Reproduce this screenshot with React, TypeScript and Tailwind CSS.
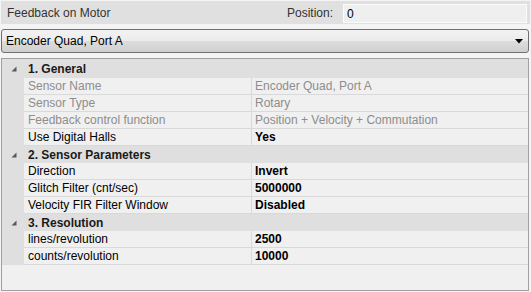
import React from "react";

type Row = { name: string; value: string; readOnly?: boolean };
type Cat = { title: string; rows: Row[] };

const cats: Cat[] = [
  {
    title: "1. General",
    rows: [
      { name: "Sensor Name", value: "Encoder Quad, Port A", readOnly: true },
      { name: "Sensor Type", value: "Rotary", readOnly: true },
      { name: "Feedback control function", value: "Position + Velocity + Commutation", readOnly: true },
      { name: "Use Digital Halls", value: "Yes" },
    ],
  },
  {
    title: "2. Sensor Parameters",
    rows: [
      { name: "Direction", value: "Invert" },
      { name: "Glitch Filter (cnt/sec)", value: "5000000" },
      { name: "Velocity FIR Filter Window", value: "Disabled" },
    ],
  },
  {
    title: "3. Resolution",
    rows: [
      { name: "lines/revolution", value: "2500" },
      { name: "counts/revolution", value: "10000" },
    ],
  },
];

function Expander() {
  return (
    <svg width="6" height="6" viewBox="0 0 6 6" className="block">
      <polygon points="5.5,0.5 5.5,5.5 0.5,5.5" fill="#595959" />
    </svg>
  );
}

export default function App() {
  return (
    <div
      className="w-[531px] h-[292px] bg-[#f4f4f4] p-[1px] text-[12px] text-black flex flex-col overflow-hidden"
      style={{ fontFamily: '"Liberation Sans", Arial, sans-serif' }}
    >
      {/* Header bar */}
      <div className="h-[23px] bg-[#e0e0e0] flex items-center shrink-0">
        <div className="pl-[6px] text-[#333] flex-1">Feedback on Motor</div>
        <div className="text-[#333] mr-[10px]">Position:</div>
        <div className="w-[184px] h-[19px] mt-[3px] mr-[3px] self-start bg-[#efefef] border border-[#fbfbfb] flex items-center pl-[3px] text-black">
          0
        </div>
      </div>

      {/* Combo */}
      <div className="mt-[5px] mr-[1px] h-[24px] shrink-0 rounded-[3px] border border-[#707070] bg-[linear-gradient(to_bottom,#f3f3f3_0%,#ebebeb_50%,#dddddd_50%,#cfcfcf_100%)] flex items-center pl-[4px] pr-[5px]">
        <span className="flex-1">Encoder Quad, Port A</span>
        <svg width="8" height="5" viewBox="0 0 8 5" className="block">
          <polygon points="0,0 8,0 4,4.5" fill="#000" />
        </svg>
      </div>

      {/* Property grid */}
      <div className="mt-[5px] mr-[1px] flex-1 border border-[#a0a0a0] bg-[#f0f0f0] flex flex-col">
        {cats.map((c, i) => (
          <React.Fragment key={c.title}>
            <div
              className={`${i === 0 ? "h-[19px] pt-[1px]" : "h-[17px]"} bg-[#dfdfdf] flex items-center shrink-0`}
            >
              <div className="w-[22px] flex justify-center pl-[2px]">
                <Expander />
              </div>
              <div className="pl-[4px] font-bold text-[#1a1a1a]">{c.title}</div>
            </div>
            {c.rows.map((r) => (
              <div key={r.name} className="h-[17px] flex shrink-0">
                <div className="w-[22px] bg-[#dfdfdf]" />
                <div
                  className={`w-[228px] border-b border-r border-[#d9d9d9] pl-[4px] leading-[17px] ${
                    r.readOnly ? "text-[#8d8d8d]" : "text-black"
                  }`}
                >
                  {r.name}
                </div>
                <div
                  className={`flex-1 border-b border-[#d9d9d9] pl-[3px] leading-[17px] ${
                    r.readOnly ? "text-[#8d8d8d]" : "text-black font-bold"
                  }`}
                >
                  {r.value}
                </div>
              </div>
            ))}
          </React.Fragment>
        ))}
      </div>
    </div>
  );
}
